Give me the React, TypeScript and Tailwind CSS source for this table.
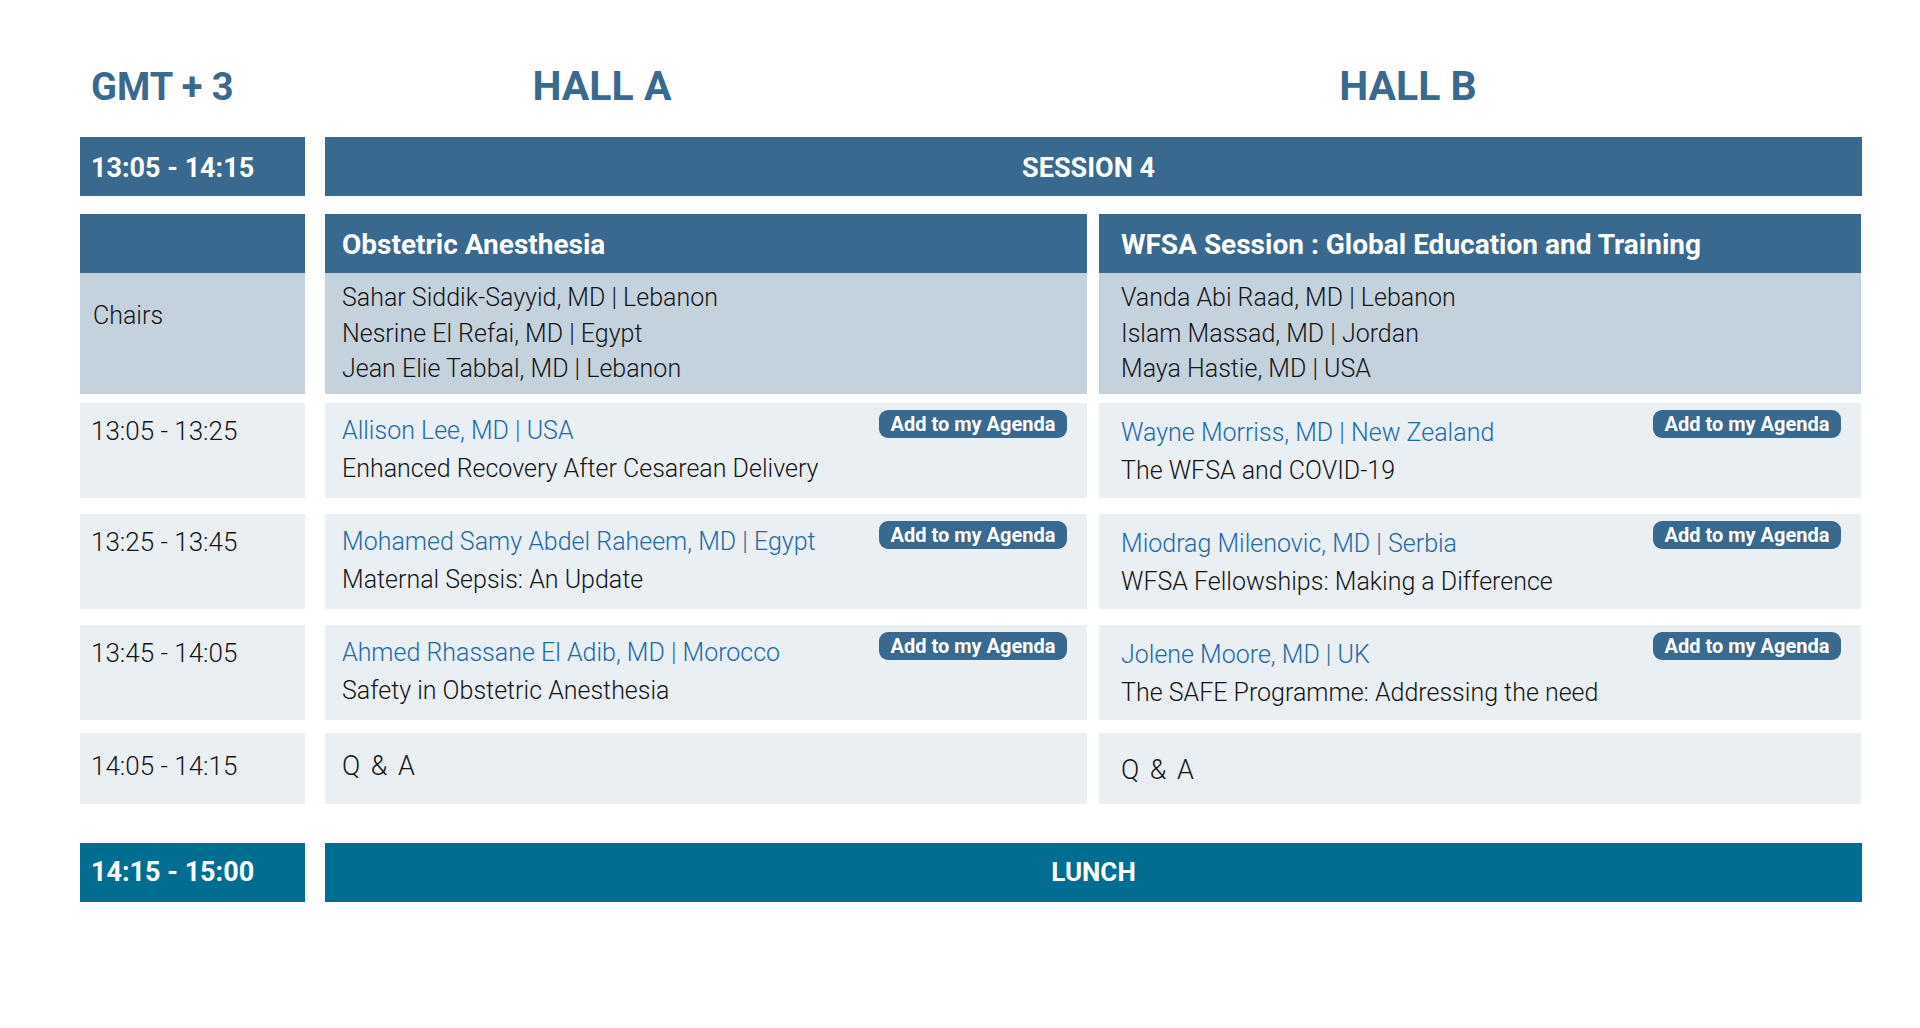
import React from 'react';

// Types
interface Talk {
  time: string;
  a: { speaker: string; title: string };
  b: { speaker: string; title: string };
}

const talks: Talk[] = [
  {
    time: '13:05 - 13:25',
    a: { speaker: 'Allison Lee, MD | USA', title: 'Enhanced Recovery After Cesarean Delivery' },
    b: { speaker: 'Wayne Morriss, MD | New Zealand', title: 'The WFSA and COVID-19' },
  },
  {
    time: '13:25 - 13:45',
    a: { speaker: 'Mohamed Samy Abdel Raheem, MD | Egypt', title: 'Maternal Sepsis: An Update' },
    b: { speaker: 'Miodrag Milenovic, MD | Serbia', title: 'WFSA Fellowships: Making a Difference' },
  },
  {
    time: '13:45 - 14:05',
    a: { speaker: 'Ahmed Rhassane El Adib, MD | Morocco', title: 'Safety in Obstetric Anesthesia' },
    b: { speaker: 'Jolene Moore, MD | UK', title: 'The SAFE Programme: Addressing the need' },
  },
];

const chairsA = ['Sahar Siddik-Sayyid, MD | Lebanon', 'Nesrine El Refai, MD | Egypt', 'Jean Elie Tabbal, MD | Lebanon'];
const chairsB = ['Vanda Abi Raad, MD | Lebanon', 'Islam Massad, MD | Jordan', 'Maya Hastie, MD | USA'];

function AgendaButton() {
  return (
    <button className="absolute top-[7px] right-[20px] h-[28px] w-[188px] rounded-[9px] bg-[#3a698f] text-[20px] font-bold leading-[28px] text-white">
      Add to my Agenda
    </button>
  );
}

function TalkCell({ speaker, title, hall }: { speaker: string; title: string; hall: 'a' | 'b' }) {
  return (
    <div className={`relative h-full w-[762px] bg-[#eaeff3] ${hall === 'a' ? 'ml-[20px] pl-[17px] pt-[9px]' : 'ml-[12px] pl-[22px] pt-[11px]'}`}>
      <div className="leading-[38px] text-[#1f6aa3]">{speaker}</div>
      <div className="leading-[38px] text-[#151515]">{title}</div>
      <AgendaButton />
    </div>
  );
}

export default function App() {
  return (
    <div className="min-h-[1028px] bg-white pl-[80px] pt-[60px] text-[25px] font-light text-[#151515]" style={{ fontFamily: 'Roboto, "Liberation Sans", sans-serif' }}>
      {/* hall headings */}
      <div className="mb-[23px] flex h-[54px] items-center font-bold text-[#3a698f]">
        <div className="w-[225px] pl-[11px] text-[38px]">GMT + 3</div>
        <div className="ml-[20px] w-[762px] pr-[208px] text-center text-[41px]">HALL A</div>
        <div className="ml-[12px] w-[762px] pr-[144px] text-center text-[41px]">HALL B</div>
      </div>

      {/* session bar */}
      <div className="mb-[18px] flex h-[59px] text-[27px] font-bold text-white">
        <div className="flex w-[225px] items-center bg-[#3a698f] pl-[11px] pt-[3px]">13:05 - 14:15</div>
        <div className="ml-[20px] flex w-[1537px] items-center justify-center bg-[#3a698f] pr-[10px] pt-[3px]">SESSION 4</div>
      </div>

      {/* session titles */}
      <div className="flex h-[59px] text-[28px] font-bold text-white">
        <div className="w-[225px] bg-[#3a698f]" />
        <div className="ml-[20px] flex w-[762px] items-center bg-[#3a698f] pl-[17px] pt-[2px]">Obstetric Anesthesia</div>
        <div className="ml-[12px] flex w-[762px] items-center bg-[#3a698f] pl-[22px] pt-[2px]">WFSA Session : Global Education and Training</div>
      </div>

      {/* chairs */}
      <div className="mb-[9px] flex h-[121px]">
        <div className="w-[225px] bg-[#c4d2de] pl-[13px] pt-[24px] leading-[38px]">Chairs</div>
        <div className="ml-[20px] w-[762px] bg-[#c4d2de] pl-[17px] pt-[7px] leading-[35.5px]">
          {chairsA.map((c) => <div key={c}>{c}</div>)}
        </div>
        <div className="ml-[12px] w-[762px] bg-[#c4d2de] pl-[22px] pt-[7px] leading-[35.5px]">
          {chairsB.map((c) => <div key={c}>{c}</div>)}
        </div>
      </div>

      {/* talks */}
      <div className="flex flex-col">
        {talks.map((t, i) => (
          <div key={t.time} className={`flex h-[95px] ${i === 2 ? 'mb-[13px]' : 'mb-[16px]'}`}>
            <div className="w-[225px] bg-[#eaeff3] pl-[11px] pt-[9px] text-[26px] leading-[38px]">{t.time}</div>
            <TalkCell hall="a" speaker={t.a.speaker} title={t.a.title} />
            <TalkCell hall="b" speaker={t.b.speaker} title={t.b.title} />
          </div>
        ))}
      </div>

      {/* Q & A */}
      <div className="mb-[39px] flex h-[71px]">
        <div className="w-[225px] bg-[#eaeff3] pl-[11px] pt-[14px] text-[26px] leading-[38px]">14:05 - 14:15</div>
        <div className="ml-[20px] w-[762px] bg-[#eaeff3] pl-[17px] pt-[14px] text-[27px] leading-[38px] tracking-[2px]">Q &amp; A</div>
        <div className="ml-[12px] w-[762px] bg-[#eaeff3] pl-[22px] pt-[18px] text-[27px] leading-[38px] tracking-[2px]">Q &amp; A</div>
      </div>

      {/* lunch */}
      <div className="flex h-[59px] font-bold text-white">
        <div className="flex w-[225px] items-center bg-[#006e91] pl-[11px] text-[27px]">14:15 - 15:00</div>
        <div className="ml-[20px] flex w-[1537px] items-center justify-center bg-[#006e91] text-[26px]">LUNCH</div>
      </div>
    </div>
  );
}
